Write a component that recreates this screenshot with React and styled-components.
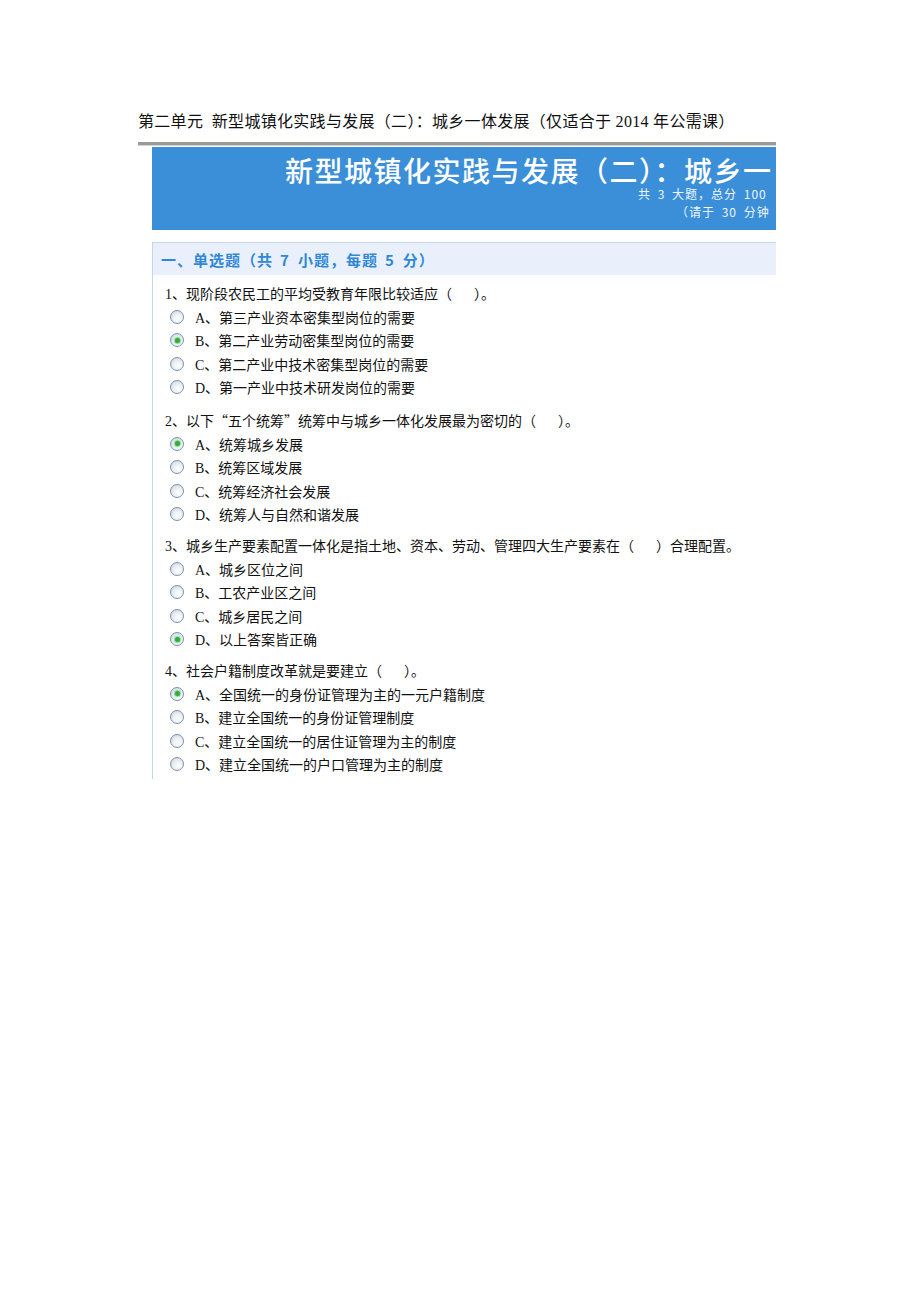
import React from "react";
import styled, { createGlobalStyle } from "styled-components";

const GlobalStyle = createGlobalStyle`
  html, body {
    margin: 0;
    padding: 0;
    background: #fff;
  }
`;

const Page = styled.div`
  padding: 111px 0 0 138px;
  width: 638px;
`;

const DocTitle = styled.h1`
  margin: 0;
  font-family: "Liberation Serif", "Noto Sans CJK SC", serif;
  font-weight: normal;
  font-size: 16px;
  line-height: 22px;
  letter-spacing: 0.3px;
  color: #111;
  white-space: nowrap;
`;

const Rule = styled.div`
  margin-top: 9px;
  height: 3px;
  background: #9c9a96;
  border-bottom: 1px solid #d6d4d0;
`;

const Panel = styled.div`
  margin: 1px 0 0 14px;
  width: 624px;
`;

const Banner = styled.div`
  height: 83px;
  background: #3b8ed8;
  overflow: hidden;
  padding-top: 8px;
  box-sizing: border-box;
  color: #fff;
  font-family: "Noto Sans CJK SC", sans-serif;
  white-space: nowrap;
`;

const BannerTitle = styled.div`
  padding-left: 133px;
  font-size: 28px;
  line-height: 30px;
  font-weight: 500;
  letter-spacing: 1.5px;
`;

const BannerLine = styled.div`
  padding-left: ${(p) => p.$indent}px;
  font-size: 12px;
  line-height: 17.5px;
  letter-spacing: 1px;
  word-spacing: 3px;
  color: #eef5ff;
`;

const Section = styled.div`
  margin-top: 12px;
  border-left: 1px solid #c4d6ee;
  padding-bottom: 3px;
`;

const SectionHeader = styled.div`
  height: 32px;
  border-top: 1px solid #c8d8ee;
  background: #e9f0fb;
  padding-left: 8px;
  display: flex;
  align-items: center;
  font-family: "Noto Sans CJK SC", sans-serif;
  font-size: 15px;
  font-weight: 700;
  color: #3188d6;
  letter-spacing: 1px;
  white-space: nowrap;
`;

const Num = styled.span`
  margin: 0 8px 0 7px;
`;

const QuestionList = styled.div`
  padding: 10px 0 0 12px;
  font-family: "Liberation Serif", "Noto Sans CJK SC", serif;
  font-size: 14px;
  color: #111;
`;

const Question = styled.div`
  margin-bottom: 11px;

  &:last-child {
    margin-bottom: 0;
  }
`;

const Stem = styled.div`
  line-height: 20px;
  white-space: nowrap;
`;

const CjkMark = styled.span`
  font-family: "Noto Sans CJK SC", sans-serif;
`;

const Blank = styled.span`
  display: inline-block;
  width: 22px;
`;

const Option = styled.label`
  display: flex;
  align-items: center;
  height: 23.5px;
  padding-left: 5px;
  white-space: nowrap;
`;

const Radio = styled.span`
  width: 14px;
  height: 14px;
  box-sizing: border-box;
  border-radius: 50%;
  border: 1px solid #7893b4;
  background: radial-gradient(circle at 60% 65%, #ffffff 0%, #eceff2 45%, #c4ccd4 100%);
  margin-right: 11px;
  display: flex;
  align-items: center;
  justify-content: center;
  flex-shrink: 0;

  &::after {
    content: "";
    width: 5px;
    height: 5px;
    border-radius: 50%;
    background: ${(p) => (p.$checked ? "#2fae3a" : "transparent")};
    box-shadow: ${(p) => (p.$checked ? "0 0 1px 1px #8fd894" : "none")};
  }
`;

const questions = [
  {
    stem: ["1、现阶段农民工的平均受教育年限比较适应（", "）。"],
    options: [
      "A、第三产业资本密集型岗位的需要",
      "B、第二产业劳动密集型岗位的需要",
      "C、第二产业中技术密集型岗位的需要",
      "D、第一产业中技术研发岗位的需要",
    ],
    answer: 1,
  },
  {
    stem: [
      <>
        2、以下<CjkMark>“</CjkMark>五个统筹<CjkMark>”</CjkMark>统筹中与城乡一体化发展最为密切的（
      </>,
      "）。",
    ],
    options: [
      "A、统筹城乡发展",
      "B、统筹区域发展",
      "C、统筹经济社会发展",
      "D、统筹人与自然和谐发展",
    ],
    answer: 0,
  },
  {
    stem: ["3、城乡生产要素配置一体化是指土地、资本、劳动、管理四大生产要素在（", "）合理配置。"],
    options: [
      "A、城乡区位之间",
      "B、工农产业区之间",
      "C、城乡居民之间",
      "D、以上答案皆正确",
    ],
    answer: 3,
  },
  {
    stem: ["4、社会户籍制度改革就是要建立（", "）。"],
    options: [
      "A、全国统一的身份证管理为主的一元户籍制度",
      "B、建立全国统一的身份证管理制度",
      "C、建立全国统一的居住证管理为主的制度",
      "D、建立全国统一的户口管理为主的制度",
    ],
    answer: 0,
  },
];

export default function App() {
  return (
    <>
      <GlobalStyle />
      <Page>
        <DocTitle>
          第二单元&nbsp;&nbsp;新型城镇化实践与发展（二）：城乡一体发展（仅适合于 2014 年公需课）
        </DocTitle>
        <Rule />
        <Panel>
          <Banner>
            <BannerTitle>新型城镇化实践与发展（二）：城乡一</BannerTitle>
            <BannerLine $indent={486}>共 3 大题，总分 100</BannerLine>
            <BannerLine $indent={524}>（请于 30 分钟</BannerLine>
          </Banner>
          <Section>
            <SectionHeader>
              一、单选题（共<Num>7</Num>小题，每题<Num>5</Num>分）
            </SectionHeader>
            <QuestionList>
              {questions.map((q, i) => (
                <Question key={i}>
                  <Stem>
                    {q.stem[0]}
                    <Blank />
                    {q.stem[1]}
                  </Stem>
                  {q.options.map((o, j) => (
                    <Option key={j}>
                      <Radio $checked={j === q.answer} />
                      {o}
                    </Option>
                  ))}
                </Question>
              ))}
            </QuestionList>
          </Section>
        </Panel>
      </Page>
    </>
  );
}
